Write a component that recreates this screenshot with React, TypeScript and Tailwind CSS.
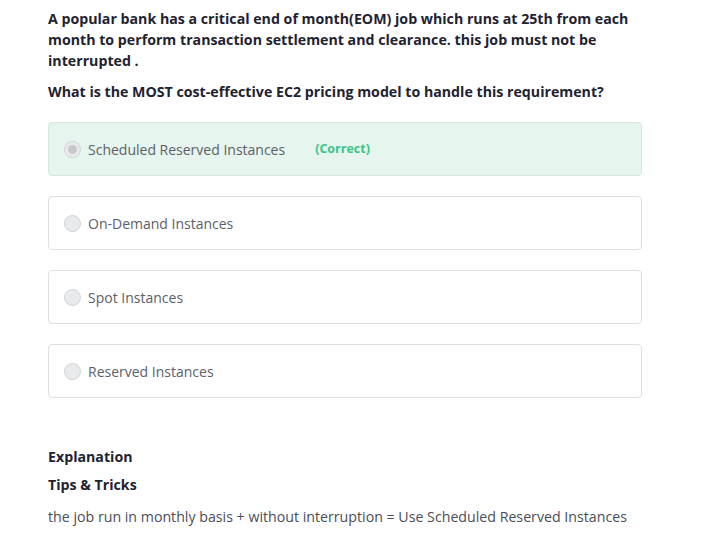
const options = [
  { label: "Scheduled Reserved Instances", correct: true },
  { label: "On-Demand Instances", correct: false },
  { label: "Spot Instances", correct: false },
  { label: "Reserved Instances", correct: false },
];

const App = () => {
  return (
    <div className="min-h-[533px] bg-white px-12 pt-2 font-['Open_Sans',sans-serif] text-[#1f2330]">
      <div className="w-[594px]">
        <p className="text-[14.2px] font-bold leading-[21px]">
          A popular bank has a critical end of month(EOM) job which runs at 25th from each month to perform transaction settlement and clearance. this job must not be interrupted .
        </p>
        <p className="mt-[10px] text-[14.2px] font-bold leading-[21px]">
          What is the MOST cost-effective EC2 pricing model to handle this requirement?
        </p>
        <div className="mt-[20px] flex flex-col gap-5">
          {options.map((o) => (
            <div
              key={o.label}
              className={`flex h-[54px] items-center rounded border px-[15px] ${o.correct ? "border-[#d4e8de] bg-[#e6f5ee]" : "border-[#dcdfe4] bg-white"}`}
            >
              <span className="flex h-[17px] w-[17px] items-center justify-center rounded-full border border-[#cfd2d6] bg-[#e9eaec]">
                {o.correct && <span className="h-[9px] w-[9px] rounded-full bg-[#c7c9cc]" />}
              </span>
              <span className="ml-[7px] text-[14px] text-[#5c6068]">{o.label}</span>
              {o.correct && (
                <span className="ml-[30px] text-[12.5px] font-bold text-[#3cc48a]">(Correct)</span>
              )}
            </div>
          ))}
        </div>
        <h3 className="mt-[48px] text-[14.2px] font-bold leading-[21px]">Explanation</h3>
        <h4 className="mt-[7px] text-[14.2px] font-bold leading-[21px]">Tips &amp; Tricks</h4>
        <p className="mt-[11px] text-[14.2px] leading-[21px] text-[#4a4e57]">
          the job run in monthly basis + without interruption = Use Scheduled Reserved Instances
        </p>
      </div>
    </div>
  );
};

export default App;
